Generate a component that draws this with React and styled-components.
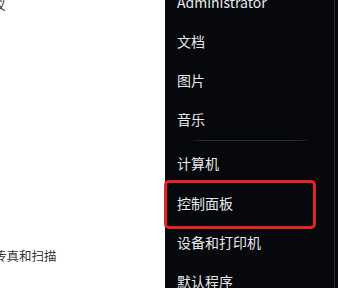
import React from "react";
import styled, { createGlobalStyle } from "styled-components";

const Global = createGlobalStyle`
  html, body { margin: 0; padding: 0; background: #ffffff; }
  body { width: 338px; height: 288px; overflow: hidden; }
  #root { width: 338px; height: 288px; }
`;

const Screen = styled.div`
  display: flex;
  width: 338px;
  height: 288px;
  overflow: hidden;
  font-family: "Segoe UI", "Noto Sans CJK SC", "Noto Sans", sans-serif;
`;

const LeftPane = styled.div`
  width: 165px;
  flex: none;
  background: #ffffff;
  display: flex;
  flex-direction: column;
  overflow: hidden;
`;

const PaneText = styled.div`
  font-size: 12.5px;
  line-height: 14px;
  color: #333333;
  white-space: nowrap;
  margin-left: ${(p) => p.$shift}px;
  margin-top: ${(p) => p.$top}px;
`;

const StartPanel = styled.div`
  flex: 1;
  display: flex;
  background: #06080c;
  border-left: 1px solid #0b0d10;
`;

const MenuList = styled.div`
  flex: 1;
  display: flex;
  flex-direction: column;
  margin-top: -18px;
`;

const Item = styled.div`
  position: relative;
  height: ${(p) => (p.$tall ? 40 : 39)}px;
  flex: none;
  display: flex;
  align-items: center;
  padding-left: 11px;
  font-size: 14px;
  color: #e6e8ea;
  white-space: nowrap;
`;

const Highlight = styled.span`
  position: absolute;
  left: -2px;
  top: -3px;
  width: 146px;
  height: 43px;
  border: 3px solid #e3241f;
  border-radius: 5px;
  pointer-events: none;
`;

const Separator = styled.div`
  height: 5px;
  flex: none;
  display: flex;
  align-items: center;
  padding-left: 27px;
  padding-right: 26px;
  &::before {
    content: "";
    flex: 1;
    height: 1px;
    background: linear-gradient(90deg, #16181c, #2c2f34 10%, #2c2f34 90%, #16181c);
    box-shadow: 0 1px 0 #020305;
  }
`;

const EdgeLine = styled.div`
  width: 1px;
  flex: none;
  margin-right: 3px;
  background: #2e3034;
`;

const top = ["Administrator", "文档", "图片", "音乐"];
const bottom = ["计算机", "控制面板", "设备和打印机", "默认程序"];

export default function App() {
  return (
    <>
      <Global />
      <Screen>
        <LeftPane>
          <PaneText $shift={-7} $top={-2}>议</PaneText>
          <PaneText $shift={-6} $top={237}>传真和扫描</PaneText>
        </LeftPane>
        <StartPanel>
          <MenuList>
            {top.map((t) => (
              <Item key={t}>{t}</Item>
            ))}
            <Separator />
            {bottom.map((t) => (
              <Item key={t} $tall={t === "计算机"}>
                {t}
                {t === "控制面板" && <Highlight />}
              </Item>
            ))}
          </MenuList>
          <EdgeLine />
        </StartPanel>
      </Screen>
    </>
  );
}
